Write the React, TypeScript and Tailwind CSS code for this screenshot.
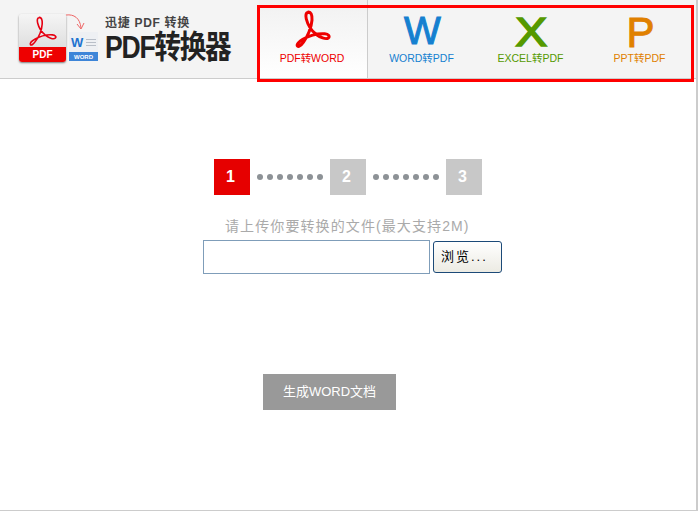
const SANS = "font-['Liberation_Sans','Noto_Sans_CJK_SC',sans-serif]";

function AcrobatMark({ className }: { className?: string }) {
  return (
    <svg viewBox="0 0 40 40" className={className} fill="none" stroke="currentColor" strokeLinecap="round" strokeLinejoin="round">
      <path d="M15.500 3.500c-2.800-.4-3 3.200-2.200 6.500 1.500 6 5.500 12 10 15.500 3.500 2.700 9.500 5.300 12 3.500 2-1.500.2-4-3.500-4.200-6.500-.4-15.500 1.800-22 5.500-3.300 1.900-6.300 5-5.500 6.600.9 1.700 3.700-.5 6.200-3.900 3.800-5 8-14.500 8.500-21.800.2-3.700-.5-7.900-3.500-8.200z" />
    </svg>
  );
}

function Logo() {
  return (
    <div className="flex w-[259px] shrink-0 items-start pt-[14px] pl-[19px]">
      <div className="flex h-[48px] w-[47px] flex-col overflow-hidden rounded-[3px] bg-gradient-to-b from-[#f5f5f5] to-[#d5d5d5] shadow-[0_1px_2px_rgba(0,0,0,0.5)]">
        <div className="flex h-[33px] items-center justify-center text-[#e60012]">
          <AcrobatMark className="h-[32px] w-[32px] [stroke-width:2]" />
        </div>
        <div className="flex flex-1 items-center justify-center bg-[#ee0000] text-[10px] font-bold text-white">PDF</div>
      </div>
      <div className="relative mt-[18px] ml-[3px] flex h-[29px] w-[29px] flex-col bg-[#eef0f3]">
        <svg viewBox="0 0 22 22" className="absolute -top-[18px] -left-[4px] h-[22px] w-[22px]" fill="none" stroke="#ee6666" strokeWidth="1">
          <path d="M1 1c8-1 14 3 15 13M12 10l4 5 3-6" />
        </svg>
        <div className="flex h-[20px] items-center justify-between pr-[2px] pl-[2px]">
          <span className="text-[13px] leading-none font-bold text-[#1e74d0]">W</span>
          <div className="flex w-[10px] flex-col gap-[2px]">
            <span className="h-px bg-[#b9bfc8]" />
            <span className="h-px bg-[#b9bfc8]" />
            <span className="h-px bg-[#b9bfc8]" />
          </div>
        </div>
        <div className="mt-auto flex h-[9px] items-center justify-center bg-[#3d85d8] text-[6px] leading-none font-bold text-white">WORD</div>
      </div>
      <div className="ml-[7px] flex flex-col">
        <span className="mt-[2px] text-[12px] leading-[15px] font-bold tracking-[0.7px] whitespace-nowrap text-[#444]">迅捷 PDF 转换</span>
        <span className="origin-left scale-x-[0.83] text-[32px] leading-[33px] font-bold tracking-[-1.500px] whitespace-nowrap text-[#222]">PDF转换器</span>
      </div>
    </div>
  );
}

function Tab({ label, color, active, children }: { label: string; color: string; active?: boolean; children: React.ReactNode }) {
  return (
    <div className={`flex w-[109px] flex-col items-center ${color} ${active ? "border-r border-[#cccccc] bg-gradient-to-b from-[#f1f1f1] to-white" : ""}`}>
      <div className="flex h-[51px] w-full items-end justify-center">{children}</div>
      <span className="-translate-x-px text-[10.500px] leading-[14px] whitespace-nowrap">{label}</span>
    </div>
  );
}

function Step({ n, active }: { n: number; active?: boolean }) {
  return (
    <div className={`flex h-[36px] w-[36px] items-center justify-center pr-[3px] text-[16px] font-bold text-white ${active ? "bg-[#e60000]" : "bg-[#c8c8c8]"}`}>
      {n}
    </div>
  );
}

function Dots() {
  return (
    <div className="flex w-[80px] items-center justify-center gap-[4px]">
      {[0, 1, 2, 3, 4, 5, 6].map((i) => (
        <span key={i} className="h-[6px] w-[6px] rounded-full bg-[#8d9296]" />
      ))}
    </div>
  );
}

export default function App() {
  return (
    <div className={`relative h-[511px] w-[699px] overflow-hidden bg-white ${SANS}`}>
      <div className="flex h-[511px] w-[698px] flex-col border-r-2 border-b border-[#cccccc]">
        <header className="flex h-[79px] shrink-0 border-b border-[#cccccc] bg-[#f4f4f4]">
          <Logo />
          <div className="flex">
            <Tab label="PDF转WORD" color="text-[#ee0000]" active>
              <AcrobatMark className="mb-[2px] h-[40px] w-[40px] [stroke-width:3]" />
            </Tab>
            <Tab label="WORD转PDF" color="text-[#1580d0]">
              <span className="text-[39px] leading-[40px] [-webkit-text-stroke:1px_currentColor]">W</span>
            </Tab>
            <Tab label="EXCEL转PDF" color="text-[#559900]">
              <span className="-mb-[1px] scale-x-[1.2] text-[40px] leading-[40px] [-webkit-text-stroke:1.500px_currentColor]">X</span>
            </Tab>
            <Tab label="PPT转PDF" color="text-[#e08000]">
              <span className="text-[42px] leading-[36px] [-webkit-text-stroke:1px_currentColor]">P</span>
            </Tab>
          </div>
        </header>

        <main className="flex flex-1 flex-col">
          <div className="mt-[80px] ml-[214px] flex">
            <Step n={1} active />
            <Dots />
            <Step n={2} />
            <Dots />
            <Step n={3} />
          </div>
          <p className="mt-[21px] ml-[225px] text-[14px] leading-[20px] tracking-[1.100px] whitespace-nowrap text-[#aaaaaa]">
            请上传你要转换的文件(最大支持2M)
          </p>
          <div className="mt-[4px] ml-[203px] flex items-center gap-[3px]">
            <input type="text" className="h-[34px] w-[227px] border border-[#7f9db9] bg-white outline-none" />
            <button className="h-[32px] w-[69px] rounded-[3px] border border-[#1c4a78] bg-gradient-to-b from-white to-[#ecebe3] pl-[7px] text-left text-[13px] tracking-[2px] text-black">
              浏览...
            </button>
          </div>
          <button className="mt-[100px] ml-[263px] h-[36px] w-[133px] bg-[#999999] text-[13px] text-white">
            生成WORD文档
          </button>
        </main>
      </div>
      <div className="pointer-events-none absolute top-[5px] left-[257px] h-[77px] w-[437px] border-[3px] border-[#ff0000]" />
    </div>
  );
}
